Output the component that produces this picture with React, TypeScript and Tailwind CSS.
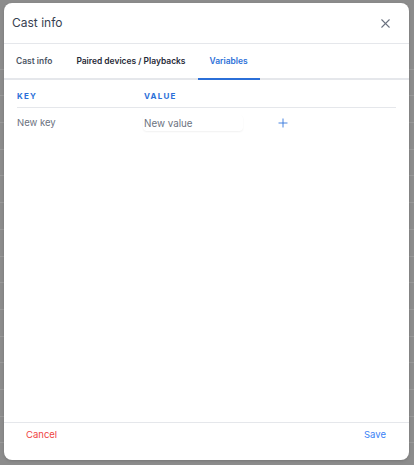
import { X, Plus } from "lucide-react";

const tabs = ["Cast info", "Paired devices / Playbacks", "Variables"];

// Rows of the list that sits behind the dimmed overlay.
const backdropRows = Array.from({ length: 17 });

function CastInfoDialog() {
  const active = "Variables";

  return (
    <div className="absolute left-[4px] top-[3px] flex h-[457px] w-[405px] flex-col overflow-hidden rounded-[8px] bg-white shadow-[0_1px_3px_rgba(0,0,0,0.15)]">
      <div className="flex h-[41px] shrink-0 items-center justify-between border-b border-[#e5e7eb] pl-[8px] pr-[16px]">
        <h2 className="text-[12px] text-[#374151]">Cast info</h2>
        <button type="button">
          <X size={15} strokeWidth={1.7} className="text-[#6b7280]" />
        </button>
      </div>

      <div className="flex h-[36px] shrink-0 border-b-2 border-[#e5e7eb]">
        {tabs.map((tab) => (
          <button
            key={tab}
            type="button"
            className={
              tab === active
                ? "-mb-[2px] border-b-2 border-[#2b6fd8] px-[12px] text-[8.45px] font-semibold text-[#2b6fd8]"
                : tab === "Cast info"
                  ? "-mb-[2px] border-b-2 border-transparent px-[12px] text-[8.45px] font-semibold text-[#4b5563]"
                  : "-mb-[2px] border-b-2 border-transparent px-[12px] text-[8.45px] font-semibold text-[#1f2937]"
            }
          >
            {tab}
          </button>
        ))}
      </div>

      <div className="flex-1 px-[13px] pt-[4px]">
        <div className="flex h-[24px] items-center border-b border-[#e5e7eb] text-[8px] font-bold tracking-[0.15em] text-[#2b6fd8]">
          <span className="w-[127px]">KEY</span>
          <span>VALUE</span>
        </div>
        <div className="flex h-[30px] items-center text-[9.5px] text-[#6b7280]">
          <span className="w-[126px]">New key</span>
          <input
            placeholder="New value"
            className="h-[16px] w-[100px] rounded-[4px] bg-white px-[1px] text-[9.8px] shadow-[0_1px_2px_rgba(0,0,0,0.06)] outline-none placeholder:text-[#6b7280]"
          />
          <button type="button" className="ml-[33px]">
            <Plus size={14} strokeWidth={1.5} className="text-[#2f74dc]" />
          </button>
        </div>
      </div>

      <div className="flex h-[38px] shrink-0 items-start justify-between border-t border-[#e5e7eb] pl-[22px] pr-[23px] pt-[5px] text-[9.5px]">
        <button type="button" className="text-[#ef4444]">Cancel</button>
        <button type="button" className="text-[#3b82f6]">Save</button>
      </div>
    </div>
  );
}

export default function App() {
  return (
    <div
      className="relative h-[465px] w-[414px] overflow-hidden bg-[#8c8c8c]"
      style={{ fontFamily: "Inter, 'Noto Sans', sans-serif" }}
    >
      <div className="pt-[43px]">
        {backdropRows.map((_, i) => (
          <div key={i} className="h-[26.7px] border-b border-[#999999]" />
        ))}
      </div>
      <CastInfoDialog />
    </div>
  );
}
